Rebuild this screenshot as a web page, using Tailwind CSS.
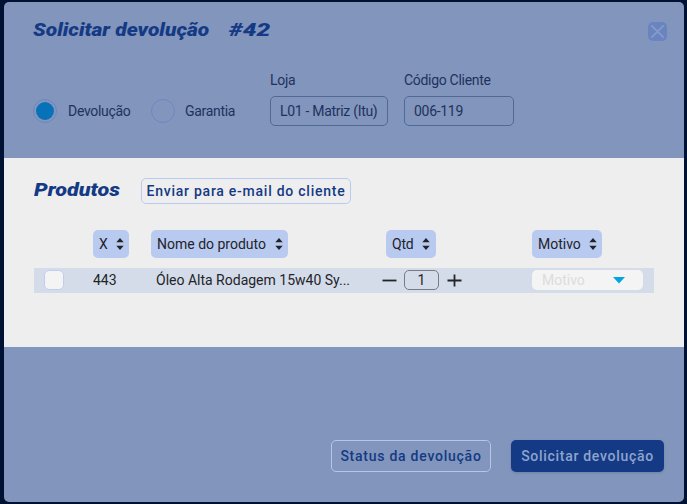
<!DOCTYPE html>
<html lang="pt-BR">
<head>
<meta charset="utf-8">
<title>Solicitar devolução</title>
<script src="https://cdn.jsdelivr.net/npm/@tailwindcss/browser@4"></script>
</head>
<body class="w-[687px] h-[504px] overflow-hidden bg-[#001233] pl-1 pt-0.5 font-['Roboto','Liberation_Sans',sans-serif] text-[14px] leading-4 whitespace-nowrap">
<main class="flex flex-col w-[680px] h-[500px] rounded-[5px] overflow-hidden bg-[#8295bc]">
  <header class="h-[156px] shrink-0 px-[29px] text-[#1e325e]">
    <div class="flex items-start justify-between pt-4">
      <h1 class="flex text-[18px] leading-6 font-black italic text-[#143a85]">
        <span class="w-[196px] origin-left scale-x-[1.165]">Solicitar devolução</span><span class="origin-left scale-x-[1.36]">#42</span>
      </h1>
      <button class="mt-1 -mr-[12px] size-[19px] rounded-[5px] bg-[#6984c0] flex items-center justify-center" aria-label="Fechar">
        <svg width="19" height="19" viewBox="0 0 19 19" fill="none" stroke="#879bc6" stroke-width="1.7" stroke-linecap="round"><path d="M3.8 3.8 15.2 15.2M15.2 3.8 3.8 15.2"/></svg>
      </button>
    </div>
    <div class="flex pt-[30px] tracking-[-0.3px]">
      <label class="flex items-center mt-[27px] h-6 w-[118px]"><span class="size-6 mr-[11px] rounded-full border border-[#6d87c3] flex items-center justify-center"><i class="size-[18px] rounded-full bg-[#0872b8]"></i></span>Devolução</label>
      <label class="flex items-center mt-[27px] h-6 w-[119px]"><span class="size-6 mr-[10px] rounded-full border border-[#6d87c3]"></span>Garantia</label>
      <div class="w-[134px]"><div class="h-[24px]">Loja</div><div class="h-[30px] w-[118px] rounded-[5px] border border-[#536993] flex items-center pl-[9px]">L01 - Matriz (Itu)</div></div>
      <div><div class="h-[24px]">Código Cliente</div><div class="h-[30px] w-[110px] rounded-[5px] border border-[#536993] flex items-center pl-[9px]">006-119</div></div>
    </div>
  </header>
  <section class="h-[189px] shrink-0 bg-[#eeeeee] px-[30px] pt-5 text-[#222428]">
    <div class="flex h-[26px]">
      <h2 class="w-[107px] origin-left scale-x-[1.2] text-[18px] leading-[23px] font-black italic text-[#143a85]">Produtos</h2>
      <button class="w-[210px] h-[26px] rounded-[5px] border border-[#b9caf1] text-[#143a85] font-medium tracking-[0.75px]">Enviar para e-mail do cliente</button>
    </div>
    <div class="flex mt-[26px] h-7 pl-[59px]">
      <div class="w-9 mr-[22px] rounded-[5px] bg-[#b9caf1] flex items-center justify-between pl-[6px] pr-[5px]">X<svg width="8" height="14" viewBox="0 0 8 14" fill="#222428"><path d="M.3 5.2 4 1 7.7 5.2ZM.3 8.8 4 13 7.7 8.8Z"/></svg></div>
      <div class="w-[137px] mr-[98px] rounded-[5px] bg-[#b9caf1] flex items-center justify-between pl-[6px] pr-[5px]">Nome do produto<svg width="8" height="14" viewBox="0 0 8 14" fill="#222428"><path d="M.3 5.2 4 1 7.7 5.2ZM.3 8.8 4 13 7.7 8.8Z"/></svg></div>
      <div class="w-[50px] mr-[96px] rounded-[5px] bg-[#b9caf1] flex items-center justify-between pl-[6px] pr-[6px] tracking-[-0.2px]">Qtd<svg width="8" height="14" viewBox="0 0 8 14" fill="#222428"><path d="M.3 5.2 4 1 7.7 5.2ZM.3 8.8 4 13 7.7 8.8Z"/></svg></div>
      <div class="w-[70px] rounded-[5px] bg-[#b9caf1] flex items-center justify-between pl-[6px] pr-[5px]">Motivo<svg width="8" height="14" viewBox="0 0 8 14" fill="#222428"><path d="M.3 5.2 4 1 7.7 5.2ZM.3 8.8 4 13 7.7 8.8Z"/></svg></div>
    </div>
    <div class="flex items-center mt-[10px] h-[25px] bg-[#d5dce9] pl-[10px] pb-px">
      <span class="size-5 rounded-[5px] border border-[#c0cff1] bg-[#f4f4f4] mr-[29px]"></span>
      <span class="w-[63px]">443</span>
      <span class="w-[226px]">Óleo Alta Rodagem 15w40 Sy...</span>
      <svg class="mr-[7px]" width="15" height="15" viewBox="0 0 15 15" stroke="#222428" stroke-width="1.8"><path d="M.5 7.5h14"/></svg>
      <span class="w-[35px] h-5 rounded-[5px] border border-[#777c84] flex items-center justify-center">1</span>
      <svg class="ml-[7.5px] mr-[70.5px]" width="15" height="15" viewBox="0 0 15 15" stroke="#222428" stroke-width="1.8"><path d="M.5 7.5h14M7.5 1.5v12"/></svg>
      <div class="w-[111px] h-5 rounded-[5px] bg-[#f4f4f4] flex items-center justify-between pl-[10px] pr-[18px] text-[#dcdcdc]">Motivo<svg width="12" height="7" viewBox="0 0 12 7" fill="#00a5e2"><path d="M0 0h12L6 6.5Z"/></svg></div>
    </div>
  </section>
  <footer class="flex justify-end pt-[93px] pr-5 gap-5 text-[14px] font-medium">
    <button class="w-[160px] h-8 rounded-[5px] border border-[#b4c6f0] text-[#143a85] tracking-[0.75px]">Status da devolução</button>
    <button class="w-[153px] h-8 rounded-[5px] bg-[#143a85] text-[#8fa4cd] tracking-[0.7px] shadow-sm">Solicitar devolução</button>
  </footer>
</main>
</body>
</html>
